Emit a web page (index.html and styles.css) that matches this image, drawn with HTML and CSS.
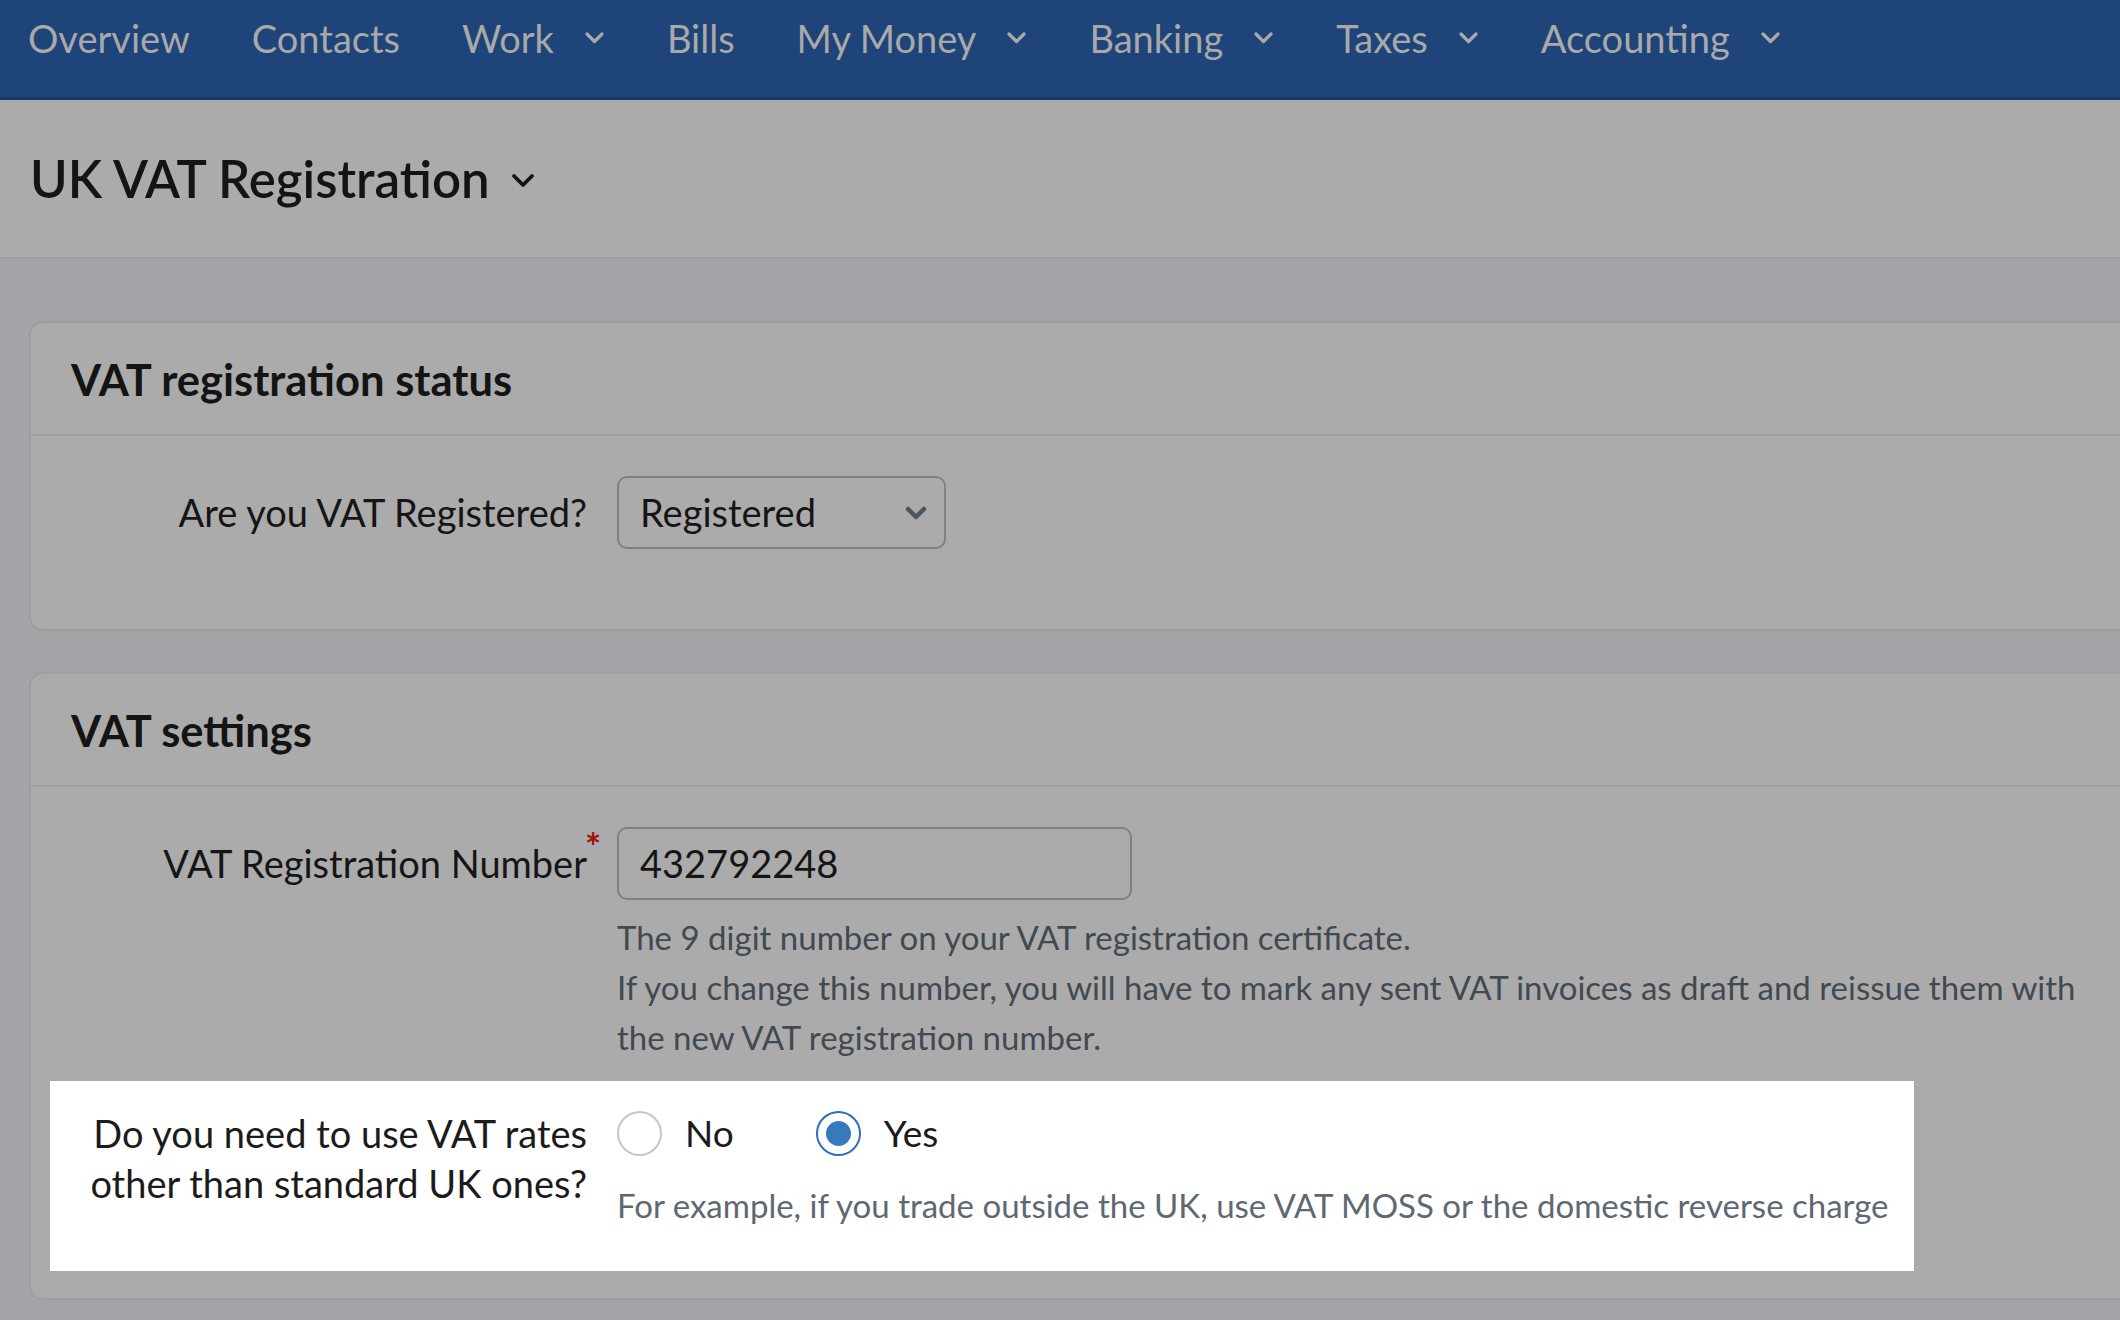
FILE: index.html
```html
<!DOCTYPE html>
<html lang="en">
<head>
<meta charset="utf-8">
<title>UK VAT Registration</title>
<link rel="stylesheet" href="styles.css">
</head>
<body>
<header class="topnav">
  <a class="topnav__item" href="#">Overview</a>
  <a class="topnav__item" href="#">Contacts</a>
  <a class="topnav__item" href="#">Work <svg class="topnav__chev" viewBox="0 0 21 14"><path d="M3 3 L10.5 10.5 L18 3"/></svg></a>
  <a class="topnav__item" href="#">Bills</a>
  <a class="topnav__item" href="#">My Money <svg class="topnav__chev" viewBox="0 0 21 14"><path d="M3 3 L10.5 10.5 L18 3"/></svg></a>
  <a class="topnav__item" href="#">Banking <svg class="topnav__chev" viewBox="0 0 21 14"><path d="M3 3 L10.5 10.5 L18 3"/></svg></a>
  <a class="topnav__item" href="#">Taxes <svg class="topnav__chev" viewBox="0 0 21 14"><path d="M3 3 L10.5 10.5 L18 3"/></svg></a>
  <a class="topnav__item" href="#">Accounting <svg class="topnav__chev" viewBox="0 0 21 14"><path d="M3 3 L10.5 10.5 L18 3"/></svg></a>
</header>

<div class="titlebar">
  <h1 class="titlebar__title">UK VAT Registration <svg class="titlebar__chev" viewBox="0 0 24 15"><path d="M3 3 L12 12 L21 3"/></svg></h1>
</div>

<main class="content">
  <section class="card">
    <h2 class="card__head">VAT registration status</h2>
    <div class="card__body card__body--status">
      <div class="field">
        <label class="field__label">Are you VAT Registered?</label>
        <div class="field__control">
          <div class="select">
            <span>Registered</span>
            <svg class="select__chev" viewBox="0 0 22 14"><path d="M3 3 L11 11 L19 3"/></svg>
          </div>
        </div>
      </div>
    </div>
  </section>

  <section class="card">
    <h2 class="card__head">VAT settings</h2>
    <div class="card__body card__body--settings">
      <div class="field">
        <label class="field__label field__label--required">VAT Registration Number<span class="required">*</span></label>
        <div class="field__control">
          <div class="textinput">432792248</div>
          <p class="help">The 9 digit number on your VAT registration certificate.<br>If you change this number, you will have to mark any sent VAT invoices as draft and reissue them with the new VAT registration number.</p>
        </div>
      </div>

      <div class="field field--spotlight">
        <label class="field__label field__label--multi">Do you need to use VAT rates other than standard UK ones?</label>
        <div class="field__control">
          <div class="radios">
            <span class="radio"><span class="radio__dot"></span><span class="radio__text">No</span></span>
            <span class="radio radio--checked"><span class="radio__dot"></span><span class="radio__text">Yes</span></span>
          </div>
          <p class="help help--light">For example, if you trade outside the UK, use VAT MOSS or the domestic reverse charge</p>
        </div>
      </div>
    </div>
  </section>
</main>
</body>
</html>
```

FILE: styles.css
```css
* { box-sizing: border-box; }

html, body {
  margin: 0;
  padding: 0;
}

body {
  width: 2120px;
  height: 1320px;
  overflow: hidden;
  background: #a2a4a8;
  color: #151515;
  font-family: Lato, "Liberation Sans", sans-serif;
}

/* Top navigation */
.topnav {
  height: 100px;
  background: #1f4479;
  border-bottom: 3px solid #1b3a67;
  display: flex;
  align-items: flex-start;
  gap: 62px;
  padding: 15px 0 0 28px;
}

.topnav__item {
  display: flex;
  align-items: center;
  gap: 30px;
  font-size: 38px;
  line-height: 46px;
  color: #a9a9a9;
  text-decoration: none;
}

.topnav__chev {
  width: 21px;
  height: 14px;
  fill: none;
  stroke: #a9a9a9;
  stroke-width: 3.2;
  stroke-linecap: round;
  stroke-linejoin: round;
}

/* Title bar */
.titlebar {
  height: 159px;
  background: #ababab;
  border-bottom: 2px solid #9c9da1;
  display: flex;
  align-items: center;
  padding-left: 30px;
}

.titlebar__title {
  margin: 0;
  display: flex;
  align-items: center;
  gap: 21px;
  font-size: 51px;
  font-weight: 600;
  line-height: 60px;
  color: #141414;
}

.titlebar__chev {
  width: 24px;
  height: 15px;
  margin-top: 4px;
  fill: none;
  stroke: #141414;
  stroke-width: 3.8;
  stroke-linecap: round;
  stroke-linejoin: round;
}

/* Content */
.content {
  display: flex;
  flex-direction: column;
  gap: 41px;
  padding: 62px 0 0 29px;
}

.card {
  background: #ababab;
  border: 2px solid #9c9ea2;
  border-radius: 14px;
  margin-right: -12px;
}

.card__head {
  margin: 0;
  height: 113px;
  display: flex;
  align-items: center;
  padding-left: 40px;
  border-bottom: 2px solid #9c9ea2;
  font-size: 43.5px;
  font-weight: 700;
  color: #141414;
}

.card__body--status {
  padding: 40px 0 80px;
}

.card__body--settings {
  padding: 40px 0 27px;
}

.field {
  display: grid;
  grid-template-columns: 556px 1fr;
  column-gap: 30px;
  align-items: start;
}

.field__label {
  text-align: right;
  font-size: 38px;
  line-height: 73px;
  color: #151515;
}

.field__label--required {
  position: relative;
}

.required {
  position: absolute;
  left: calc(100% - 2px);
  top: 0;
  font-size: 38px;
  line-height: 38px;
  font-weight: 700;
  color: #a01212;
}

.select {
  width: 329px;
  height: 73px;
  border: 2px solid #7e8186;
  border-radius: 10px;
  display: flex;
  align-items: center;
  justify-content: space-between;
  padding: 0 17px 0 21px;
  font-size: 38px;
  line-height: 69px;
  color: #151515;
}

.select__chev {
  width: 22px;
  height: 14px;
  fill: none;
  stroke: #4b565d;
  stroke-width: 4.5;
  stroke-linecap: round;
  stroke-linejoin: round;
}

.textinput {
  width: 515px;
  height: 73px;
  border: 2px solid #7e8186;
  border-radius: 10px;
  padding-left: 21px;
  font-size: 38px;
  line-height: 69px;
  color: #151515;
}

.help {
  margin: 12px 0 0;
  font-size: 33px;
  line-height: 50px;
  color: #414951;
  max-width: 1490px;
}

/* Highlighted (spotlight) row */
.field--spotlight {
  width: 1864px;
  margin: 19px 0 0 19px;
  padding: 27px 0 41px;
  background: #ffffff;
  grid-template-columns: 537px 1fr;
}

.field__label--multi {
  line-height: 50px;
  color: #1b1b1b;
}

.radios {
  display: flex;
  align-items: center;
  gap: 82px;
  height: 50px;
}

.radio {
  display: flex;
  align-items: center;
  gap: 23px;
  font-size: 37px;
  line-height: 50px;
  color: #1b1b1b;
}

.radio__dot {
  width: 45px;
  height: 45px;
  border-radius: 50%;
  border: 2px solid #c3c6ca;
  background: #ffffff;
  display: flex;
  align-items: center;
  justify-content: center;
}

.radio--checked .radio__dot {
  border-color: #2f6fb8;
}

.radio--checked .radio__dot::after {
  content: "";
  width: 25px;
  height: 25px;
  border-radius: 50%;
  background: #3679bd;
}

.help--light {
  margin-top: 22px;
  color: #5e6872;
  max-width: none;
}
```
